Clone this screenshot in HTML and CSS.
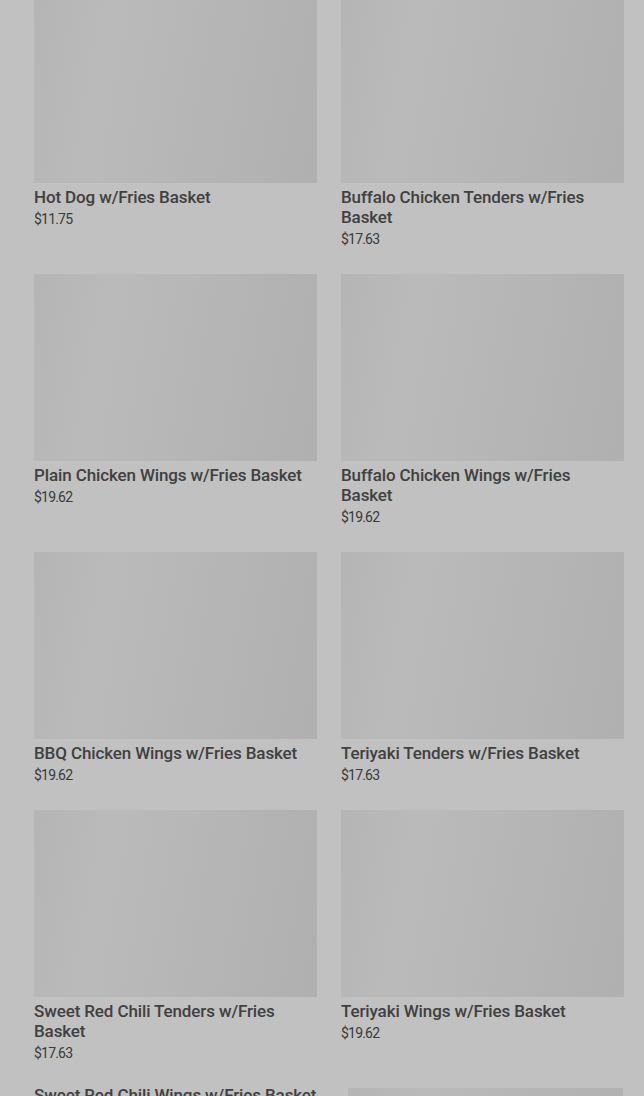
FILE: index.html
```html
<!DOCTYPE html>
<html lang="en">
<head>
  <meta charset="UTF-8" />
  <meta name="viewport" content="width=device-width, initial-scale=1.0"/>
  <title>Baskets</title>
  <link rel="stylesheet" href="styles.css">
</head>
<body>
  <div class="menu-grid">
    <div class="item">
      <div class="item-img"></div>
      <h3 class="item-name">Hot Dog w/Fries Basket</h3>
      <p class="item-price">$11.75</p>
    </div>
    <div class="item">
      <div class="item-img"></div>
      <h3 class="item-name">Buffalo Chicken Tenders w/Fries Basket</h3>
      <p class="item-price">$17.63</p>
    </div>
    <div class="item">
      <div class="item-img"></div>
      <h3 class="item-name">Plain Chicken Wings w/Fries Basket</h3>
      <p class="item-price">$19.62</p>
    </div>
    <div class="item">
      <div class="item-img"></div>
      <h3 class="item-name">Buffalo Chicken Wings w/Fries Basket</h3>
      <p class="item-price">$19.62</p>
    </div>
    <div class="item">
      <div class="item-img"></div>
      <h3 class="item-name">BBQ Chicken Wings w/Fries Basket</h3>
      <p class="item-price">$19.62</p>
    </div>
    <div class="item">
      <div class="item-img"></div>
      <h3 class="item-name">Teriyaki Tenders w/Fries Basket</h3>
      <p class="item-price">$17.63</p>
    </div>
    <div class="item">
      <div class="item-img"></div>
      <h3 class="item-name">Sweet Red Chili Tenders w/Fries Basket</h3>
      <p class="item-price">$17.63</p>
    </div>
    <div class="item">
      <div class="item-img"></div>
      <h3 class="item-name">Teriyaki Wings w/Fries Basket</h3>
      <p class="item-price">$19.62</p>
    </div>
    <div class="item item-noimg">
      <h3 class="item-name item-name-single">Sweet Red Chili Wings w/Fries Basket</h3>
      <p class="item-price">$19.62</p>
    </div>
    <div class="item">
      <div class="item-img item-img-loading"></div>
    </div>
  </div>
</body>
</html>
```

FILE: styles.css
```css
* {
  box-sizing: border-box;
}

body {
  margin: 0;
  background: #c1c1c1;
  font-family: Roboto, 'Liberation Sans', sans-serif;
  color: #3a3a3a;
  overflow: hidden;
}

.menu-grid {
  display: grid;
  grid-template-columns: 283px 283px;
  column-gap: 24px;
  row-gap: 25px;
  align-items: start;
  padding-left: 34px;
  margin-top: -4px;
}

.item {
  display: flex;
  flex-direction: column;
}

.item-img {
  height: 187px;
  background: linear-gradient(100deg, #b5b5b5 0%, #bababa 25%, #b7b7b7 50%, #b3b3b3 75%, #b0b0b0 100%);
  margin-bottom: 4px;
}

.item-img-loading {
  margin-left: 7px;
  margin-right: 1px;
}

.item-noimg {
  margin-top: -3px;
}

.item-name {
  margin: 0;
  font-size: 17px;
  line-height: 20px;
  font-weight: 500;
  letter-spacing: -0.12px;
  color: #404040;
}

.item-name-single {
  white-space: nowrap;
}

.item-price {
  margin: 3px 0 0;
  font-size: 14px;
  line-height: 19px;
  letter-spacing: -0.8px;
  color: #3a3a3a;
}
```
